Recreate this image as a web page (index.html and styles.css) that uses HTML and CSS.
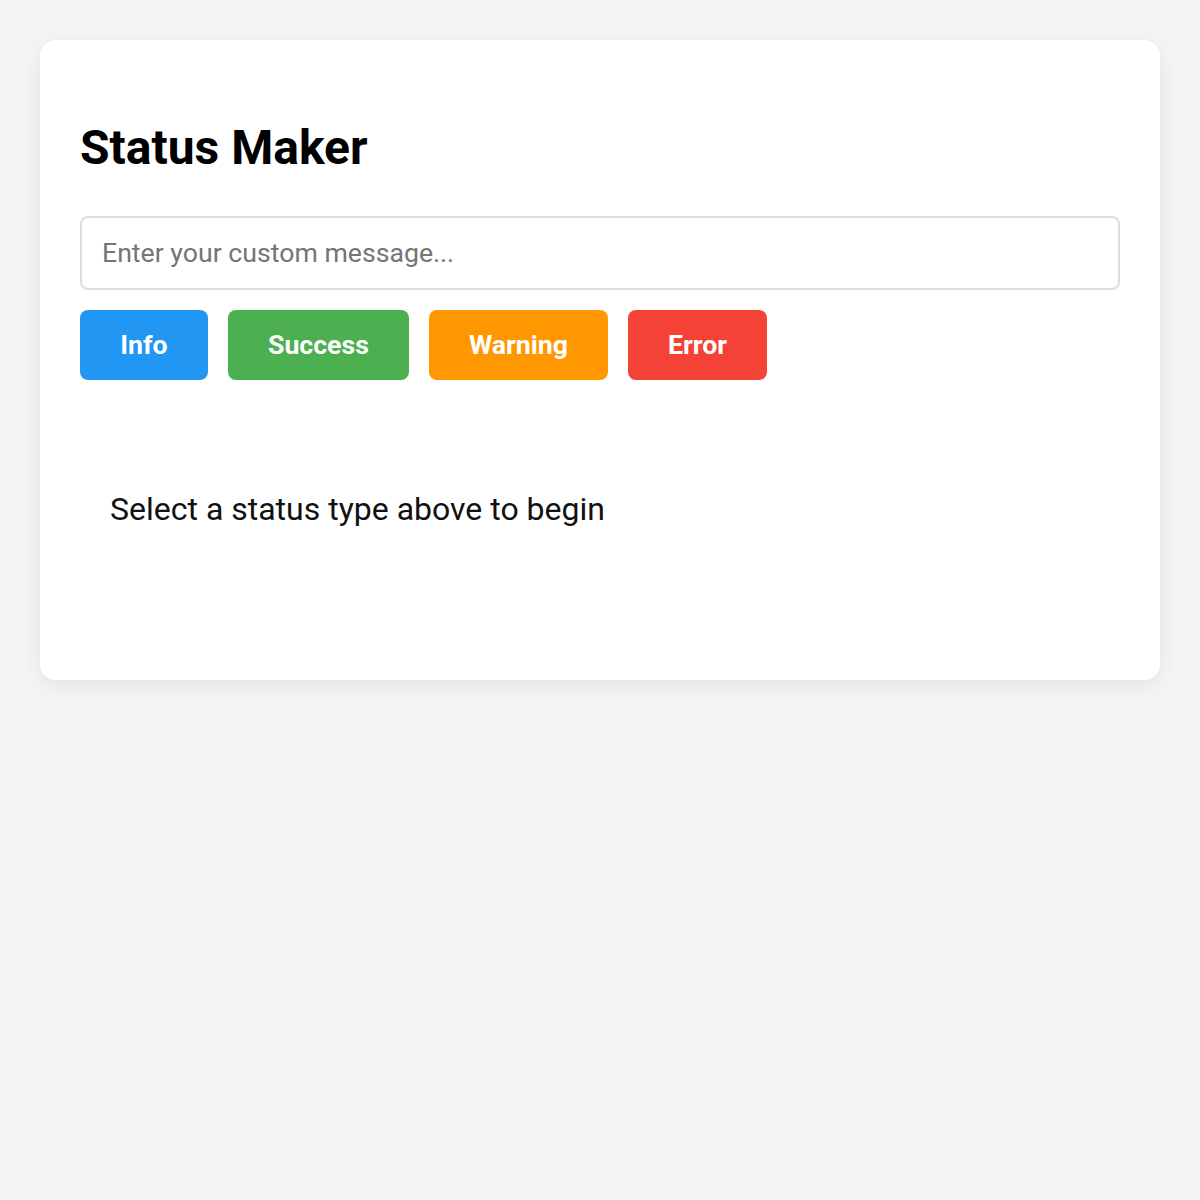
FILE: index.html
```html
<!DOCTYPE html>
<html lang="en">
<head>
<meta charset="utf-8">
<title>Status Maker</title>
<link rel="stylesheet" href="styles.css">
</head>
<body>
<div class="card">
  <h1 class="title">Status Maker</h1>
  <input class="message" type="text" placeholder="Enter your custom message...">
  <div class="buttons">
    <button class="btn btn-info">Info</button>
    <button class="btn btn-success">Success</button>
    <button class="btn btn-warning">Warning</button>
    <button class="btn btn-error">Error</button>
  </div>
  <div class="status">Select a status type above to begin</div>
</div>
</body>
</html>
```
FILE: styles.css
```css
* { box-sizing: border-box; }
html, body { margin: 0; padding: 0; }
body {
  background: #f5f5f5;
  font-family: Roboto, "Noto Sans", sans-serif;
  padding: 40px;
}
.card {
  background: #fff;
  border-radius: 16px;
  box-shadow: 0 5px 24px rgba(0,0,0,0.08);
  padding: 40px;
  display: flex;
  flex-direction: column;
}
.title {
  font-size: 48px;
  font-weight: 700;
  margin: 40px 0 40px;
  line-height: 56px;
  color: #000;
}
.message {
  width: 100%;
  height: 74px;
  padding: 0 20px;
  border: 2px solid #ddd;
  border-radius: 8px;
  font-family: Roboto, sans-serif;
  font-size: 26.67px;
  color: #333;
  outline: none;
}
.message::placeholder { color: #757575; }
.buttons {
  display: flex;
  gap: 20px;
  margin-top: 20px;
}
.btn {
  border: none;
  border-radius: 8px;
  height: 70px;
  padding: 0 40px;
  min-width: 128px;
  font-family: Roboto, sans-serif;
  font-size: 26.67px;
  font-weight: 700;
  color: #fff;
}
.btn-info { background: #2196f3; }
.btn-success { background: #4caf50; }
.btn-warning { background: #ff9800; }
.btn-error { background: #f44336; min-width: 139px; }
.status {
  margin-top: 20px;
  min-height: 240px;
  padding: 0 30px 22px;
  display: flex;
  align-items: center;
  font-size: 32px;
  color: #111;
}
```
